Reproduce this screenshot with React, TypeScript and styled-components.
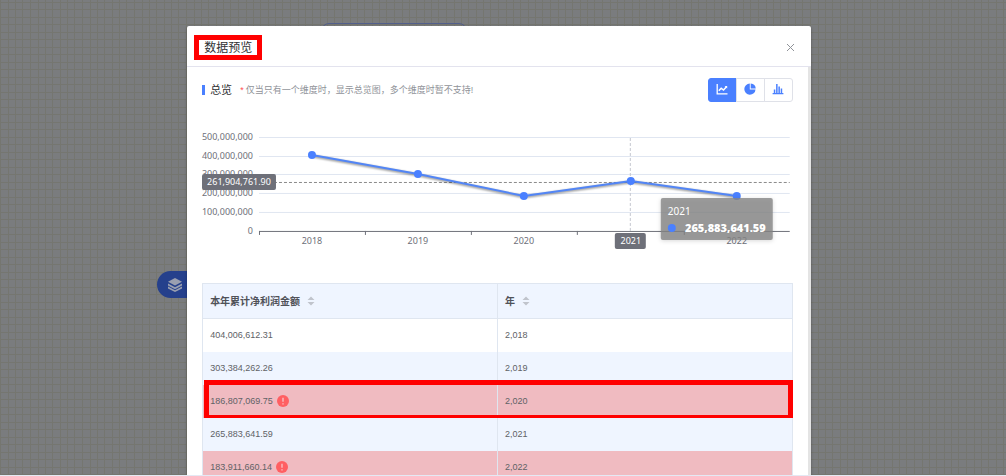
import React from "react";
import styled, { createGlobalStyle, css } from "styled-components";

const BLUE = "#4a80ff";
const LINE = "#e0e6f1";

const GlobalStyle = createGlobalStyle`
  * { box-sizing: border-box; }
  html, body, #root { height: 100%; }
  body {
    margin: 0;
    overflow: hidden;
    font-family: "Liberation Sans", "Noto Sans CJK SC", sans-serif;
    color: #606266;
  }
`;

const gridStops = (offsets: number[], end: number) =>
  offsets
    .map((at, i) => {
      const next = offsets[i + 1] ?? end;
      return `#757670 ${at}px ${at + 1}px, transparent ${at + 1}px ${next}px`;
    })
    .join(", ");

const Canvas = styled.main`
  position: relative;
  display: flex;
  justify-content: center;
  align-items: stretch;
  height: 100%;
  padding: 26px 8px 0 0;
  overflow: hidden;
  background-color: #7a7c7e;
  background-image:
    linear-gradient(${gridStops([0, 8], 15)}),
    linear-gradient(90deg, ${gridStops([0, 8, 15, 22, 30, 37, 44], 52)});
  background-size: 100% 15px, 52px 100%;
  background-position: 0 9px, 30px 0;
  border-bottom: 1px solid #e4e9f4;
`;

const FlowNode = styled.div`
  position: absolute;
  top: 23px;
  left: 321px;
  width: 146px;
  height: 30px;
  border: 1px solid #525f8c;
  border-radius: 8px;
`;

const DatasetNode = styled.button`
  position: absolute;
  top: 271px;
  left: 157px;
  display: flex;
  align-items: center;
  width: 120px;
  height: 27px;
  padding: 0 10px;
  border: 0;
  border-radius: 14px;
  background: #25408c;
`;

const Dialog = styled.section`
  position: relative;
  display: flex;
  flex-direction: column;
  width: 62.5%;
  min-height: 0;
  background: #fff;
  border-radius: 2px 2px 0 0;
  box-shadow: 0 1px 3px rgba(0, 0, 0, 0.3);
`;

const DialogHeader = styled.header`
  display: flex;
  flex: none;
  align-items: center;
  justify-content: space-between;
  height: 41px;
  padding: 2px 16px 0 7px;
  border-bottom: 1px solid #e3e3ee;
`;

const Title = styled.h1`
  margin: 0;
  padding: 1px 5px 0;
  border: 5px solid #ff0000;
  color: #303133;
  font-size: 12px;
  font-weight: 400;
  line-height: 14px;
`;

const CloseButton = styled.button`
  display: flex;
  padding: 0;
  border: 0;
  background: none;
`;

const DialogBody = styled.div`
  flex: 1;
  min-height: 0;
  padding: 11px 15px 0 15px;
  overflow: hidden;
  border-right: 3px solid #e4e4e4;
`;

const Overview = styled.div`
  display: flex;
  align-items: center;
  height: 24px;
`;

const OverviewTitle = styled.h2`
  margin: 0 8px 0 0;
  padding-left: 5px;
  border-left: 3px solid ${BLUE};
  color: #303133;
  font-size: 11px;
  font-weight: 400;
  line-height: 10px;
`;

const Hint = styled.p`
  flex: 1;
  margin: 0;
  color: #909399;
  font-size: 9px;
  line-height: 12px;
`;

const Star = styled.span`
  margin-right: 2px;
  color: #ff4d4f;
`;

const ChartTypes = styled.div`
  display: flex;
`;

const ChartTypeButton = styled.button<{ $active?: boolean }>`
  display: flex;
  align-items: center;
  justify-content: center;
  width: 29px;
  height: 24px;
  margin-left: -1px;
  padding: 0 0 2px;
  border: 1px solid ${(p) => (p.$active ? BLUE : "#dfe1e8")};
  background: ${(p) => (p.$active ? BLUE : "#fff")};
  color: ${(p) => (p.$active ? "#fff" : BLUE)};
  &:first-child { border-radius: 3px 0 0 3px; }
  &:last-child { border-radius: 0 3px 3px 0; }
`;

const Chart = styled.svg`
  display: block;
  width: 100%;
  margin: 23px 0;
  overflow: visible;
  font-family: "Noto Sans", sans-serif;
  font-size: 9px;
`;

const Table = styled.table`
  width: 100%;
  table-layout: fixed;
  border-collapse: separate;
  border-spacing: 0;
  border-top: 1px solid #dfe6f0;
  border-left: 1px solid #dfe6f0;
  font-size: 9px;
`;

const HeadCell = styled.th`
  height: 35px;
  padding: 0 7px;
  border-right: 1px solid #dfe6f0;
  border-bottom: 1px solid #dfe6f0;
  background: #eff5ff;
  color: #505258;
  font-size: 10px;
  font-weight: 700;
  text-align: left;
`;

const Inline = styled.span<{ $gap: number }>`
  display: flex;
  align-items: center;
  gap: ${(p) => p.$gap}px;
`;

const Cell = styled.td`
  height: 33px;
  padding: 0 7px 1px;
  border-right: 1px solid #dfe6f0;
`;

const Row = styled.tr<{ $tone: "plain" | "striped" | "alert"; $marked?: boolean }>`
  position: relative;
  background: ${(p) =>
    p.$tone === "alert" ? "#f0bbc1" : p.$tone === "striped" ? "#eff5ff" : "#fff"};
  ${(p) =>
    p.$marked &&
    css`
      ${Cell}:first-child::after {
        content: "";
        position: absolute;
        inset: -5px 0 -2px 1px;
        border: 5px solid #ff0000;
      }
    `}
`;

function CloseIcon() {
  return (
    <svg width="9" height="9" viewBox="0 0 9 9" stroke="#909399" strokeWidth="1" aria-hidden="true">
      <path d="M1 1l7 7M8 1l-7 7" />
    </svg>
  );
}

function LayersIcon() {
  return (
    <svg width="16" height="16" viewBox="0 0 16 16" fill="#9a9fb0" aria-hidden="true">
      <path d="M8 1l7 3.700-7 3.700-7-3.700z" />
      <path d="M1 6.500l7 3.700 7-3.700v2l-7 3.700-7-3.700z" />
      <path d="M1 9.600l7 3.700 7-3.700v1.800L8 15.100l-7-3.700z" />
    </svg>
  );
}

function LineIcon() {
  return (
    <svg width="12" height="12" viewBox="0 0 12 12" fill="none" stroke="currentColor" aria-hidden="true">
      <path d="M1.200 1v9.800h10.300" strokeWidth="1.300" />
      <path d="M2.800 7.800l2.400-2.600 2.300 1.800 3-3.300" strokeWidth="1.500" />
      <path d="M8.600 3h2.600v2.600z" fill="currentColor" stroke="none" />
    </svg>
  );
}

function PieIcon() {
  return (
    <svg width="12" height="12" viewBox="0 0 12 12" fill="currentColor" aria-hidden="true">
      <path d="M5.800.500v5.900h5.700A5.600 5.600 0 1 1 5.800.500z" />
      <path d="M6.700.400a5.300 5.300 0 0 1 5 5.100h-5z" />
    </svg>
  );
}

function BarIcon() {
  return (
    <svg width="12" height="12" viewBox="0 0 12 12" fill="currentColor" aria-hidden="true">
      <path d="M.6 10h10.800v1.200H.6zM1.800 6.500h1.500V10H1.800zM4.100 1h1.500v9H4.100zM6.400 3.500h1.500V10H6.400zM8.700 5.500h1.500V10H8.700z" />
    </svg>
  );
}

function SortIcon() {
  return (
    <svg width="8" height="10" viewBox="0 0 8 10" fill="#c0c4cc" aria-hidden="true">
      <path d="M4 .5l3.500 3.500h-7zM4 9.500L.5 6h7z" />
    </svg>
  );
}

function AlertIcon() {
  return (
    <svg width="12" height="12" viewBox="0 0 12 12" role="img" aria-label="异常">
      <circle cx="6" cy="6" r="6" fill="#ff5f62" />
      <path d="M6 2.800v4M6 8.200v1.200" stroke="#f7c5c9" strokeWidth="1.300" />
    </svg>
  );
}

const levels = [
  { label: "500,000,000", y: 12 },
  { label: "400,000,000", y: 31 },
  { label: "300,000,000", y: 49 },
  { label: "200,000,000", y: 68 },
  { label: "100,000,000", y: 87 },
  { label: "0", y: 106 },
];

const points = [
  { year: "2018", x: 110, y: 30 },
  { year: "2019", x: 216, y: 49 },
  { year: "2020", x: 322, y: 71 },
  { year: "2021", x: 429, y: 56 },
  { year: "2022", x: 535, y: 71 },
];

const path = points.map((p) => `${p.x},${p.y}`).join(" ");

function ProfitChart() {
  return (
    <Chart viewBox="0 0 591 135" role="img" aria-label="总览图">
      <defs>
        <filter id="soft" x="-10%" y="-30%" width="120%" height="160%">
          <feGaussianBlur stdDeviation="1" />
        </filter>
        <filter id="drop" x="-10%" y="-20%" width="120%" height="150%">
          <feGaussianBlur stdDeviation="2" />
        </filter>
      </defs>
      {levels.map((l, i) => (
        <g key={l.label}>
          {i < 5 && <path d={`M57 ${l.y + 0.5}H588`} stroke={LINE} />}
          <text x="51" y={l.y + 3} textAnchor="end" fill="#6e7079">{l.label}</text>
        </g>
      ))}
      <path d="M57 106.500H588M57.500 106v4M163.500 106v4M269.500 106v4M375.500 106v4M482.500 106v4" stroke="#6e7079" fill="none" />
      {points.map((p) => (
        <text key={p.year} x={p.x} y="119" textAnchor="middle" fill="#6e7079">{p.year}</text>
      ))}
      <path d="M428.500 13V106" stroke="#c4c7d0" strokeDasharray="3 2" />
      <path d="M57 57.500H588" stroke="#8a8a8a" strokeDasharray="3 2" />
      <polyline points={path} transform="translate(0 1)" fill="none" stroke="#000" strokeOpacity="0.5" strokeWidth="2" filter="url(#soft)" />
      <polyline points={path} fill="none" stroke="#5285f5" strokeWidth="2" />
      {points.map((p) => (
        <circle key={p.year} cx={p.x} cy={p.y} r="4" fill={BLUE} />
      ))}
      <rect x="0" y="49" width="74" height="16" rx="2" fill="#6e7079" />
      <text x="37" y="60" textAnchor="middle" fill="#fff">261,904,761.90</text>
      <rect x="413" y="108" width="31" height="16" rx="2" fill="#6e7079" />
      <text x="429" y="119" textAnchor="middle" fill="#fff">2021</text>
      <rect x="459" y="74" width="112" height="42" rx="2" fill="#000" fillOpacity="0.15" filter="url(#drop)" />
      <rect x="459" y="73" width="112" height="42" rx="2" fill="#868686" fillOpacity="0.8" />
      <text x="466" y="90" fill="#fff" fontSize="10">2021</text>
      <circle cx="470" cy="103" r="4" fill={BLUE} />
      <text x="564" y="107" textAnchor="end" fill="#fff" fontFamily="Open Sans, sans-serif" fontSize="11" fontWeight="800">265,883,641.59</text>
    </Chart>
  );
}

const rows = [
  { amount: "404,006,612.31", year: "2,018", tone: "plain" },
  { amount: "303,384,262.26", year: "2,019", tone: "striped" },
  { amount: "186,807,069.75", year: "2,020", tone: "alert", marked: true },
  { amount: "265,883,641.59", year: "2,021", tone: "striped" },
  { amount: "183,911,660.14", year: "2,022", tone: "alert" },
] as const;

export default function App() {
  return (
    <>
      <GlobalStyle />
      <Canvas>
        <FlowNode />
        <DatasetNode aria-label="数据集"><LayersIcon /></DatasetNode>
        <Dialog role="dialog" aria-labelledby="dialog-title">
          <DialogHeader>
            <Title id="dialog-title">数据预览</Title>
            <CloseButton aria-label="关闭"><CloseIcon /></CloseButton>
          </DialogHeader>
          <DialogBody>
            <Overview>
              <OverviewTitle>总览</OverviewTitle>
              <Hint><Star>*</Star>仅当只有一个维度时，显示总览图，多个维度时暂不支持!</Hint>
              <ChartTypes>
                <ChartTypeButton $active aria-label="折线图"><LineIcon /></ChartTypeButton>
                <ChartTypeButton aria-label="饼图"><PieIcon /></ChartTypeButton>
                <ChartTypeButton aria-label="柱状图"><BarIcon /></ChartTypeButton>
              </ChartTypes>
            </Overview>
            <ProfitChart />
            <Table>
              <thead>
                <tr>
                  <HeadCell><Inline $gap={7}>本年累计净利润金额<SortIcon /></Inline></HeadCell>
                  <HeadCell><Inline $gap={7}>年<SortIcon /></Inline></HeadCell>
                </tr>
              </thead>
              <tbody>
                {rows.map((r) => (
                  <Row key={r.year} $tone={r.tone} $marked={"marked" in r}>
                    <Cell><Inline $gap={4}>{r.amount}{r.tone === "alert" && <AlertIcon />}</Inline></Cell>
                    <Cell>{r.year}</Cell>
                  </Row>
                ))}
              </tbody>
            </Table>
          </DialogBody>
        </Dialog>
      </Canvas>
    </>
  );
}
